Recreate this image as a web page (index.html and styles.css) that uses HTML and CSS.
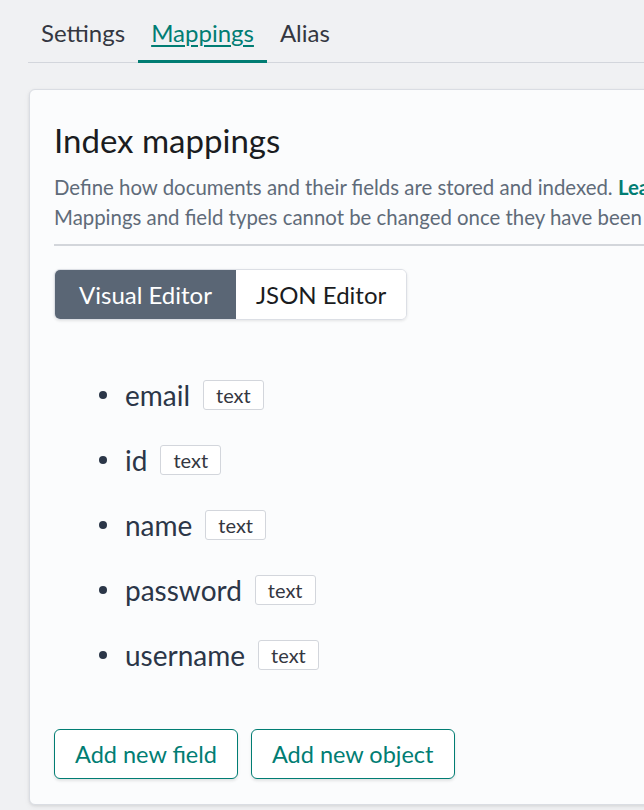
FILE: index.html
```html
<!DOCTYPE html>
<html>
<head>
<meta charset="utf-8">
<link rel="stylesheet" href="styles.css">
</head>
<body>
<div class="page">
  <nav class="tabs">
    <a class="tab">Settings</a>
    <a class="tab active"><span class="tab-label">Mappings</span></a>
    <a class="tab">Alias</a>
  </nav>
  <section class="card">
    <h1 class="title">Index mappings</h1>
    <p class="desc">Define how documents and their fields are stored and indexed. <a class="learn">Learn more.</a><br>Mappings and field types cannot be changed once they have been added.</p>
    <hr class="rule">
    <div class="btn-group">
      <button class="seg seg-on">Visual Editor</button>
      <button class="seg seg-json">JSON Editor</button>
    </div>
    <ul class="fields">
      <li class="field"><span class="fname">email</span><span class="badge">text</span></li>
      <li class="field"><span class="fname">id</span><span class="badge">text</span></li>
      <li class="field"><span class="fname">name</span><span class="badge">text</span></li>
      <li class="field"><span class="fname">password</span><span class="badge">text</span></li>
      <li class="field"><span class="fname">username</span><span class="badge">text</span></li>
    </ul>
    <div class="actions">
      <button class="btn">Add new field</button>
      <button class="btn">Add new object</button>
    </div>
  </section>
</div>
</body>
</html>
```

FILE: styles.css
```css
* { box-sizing: border-box; }
html, body { margin: 0; padding: 0; }
body {
  background: #f0f1f3;
  font-family: Lato, "Noto Sans", sans-serif;
  color: #343741;
  width: 644px;
  height: 810px;
  overflow: hidden;
}
.page {
  padding: 0 0 0 28px;
  width: 700px;
}
.tabs {
  display: flex;
  height: 63px;
  border-bottom: 1px solid #d3d6dc;
  align-items: stretch;
}
.tab {
  display: flex;
  align-items: center;
  padding: 2px 13px 0;
  font-size: 24px;
  color: #343741;
  position: relative;
}
.tab.active { color: #017d73; }
.tab-label { text-decoration: underline; text-underline-offset: 3px; text-decoration-thickness: 1.5px; }
.tab.active::after {
  content: "";
  position: absolute;
  left: 0; right: 0; bottom: -1px;
  height: 3px;
  background: #017d73;
}
.card {
  margin-top: 26px;
  margin-left: 1px;
  background: #fbfcfd;
  border: 1px solid #dadde3;
  border-radius: 6px;
  box-shadow: 0 1px 3px rgba(0,0,0,0.08), 0 2px 6px rgba(0,0,0,0.05);
  padding: 27px 24px 26px;
  height: 716px;
  overflow: hidden;
}
.title {
  margin: 0;
  font-weight: 400;
  font-size: 33px;
  line-height: 46px;
  color: #1a1c21;
}
.desc {
  margin: 9px 0 0;
  font-size: 20.4px;
  line-height: 30px;
  color: #5f6b79;
  white-space: nowrap;
}
.learn { color: #017d73; font-weight: 700; }
.rule {
  margin: 12px 0 0;
  border: 0;
  height: 2px;
  background: #d3d6db;
}
.btn-group {
  margin-top: 23px;
  display: inline-flex;
  border-radius: 6px;
  box-shadow: 0 1px 3px rgba(0,0,0,0.1);
  border: 1px solid #dcdfe5;
  overflow: hidden;
  height: 51px;
}
.seg {
  font-family: inherit;
  font-size: 24px;
  border: 0;
  background: #fff;
  color: #1a1c21;
  padding: 0 24px;
  margin: 0;
}
.seg-json { padding: 0 20px; }
.seg-on { background: #5a6675; color: #fff; }
.fields {
  margin: 42px 0 0;
  padding: 0 0 0 71px;
  list-style: none;
  color: #2b3648;
}
.field {
  height: 65px;
  display: flex;
  align-items: center;
  font-size: 28px;
  line-height: 46px;
}
.field::before {
  content: "";
  flex: none;
  width: 8px;
  height: 8px;
  margin-left: -26px;
  margin-right: 18px;
  border-radius: 50%;
  background: #2b3648;
}
.badge {
  display: inline-block;
  margin-left: 13px;
  border: 1px solid #d3d6dc;
  border-radius: 3px;
  background: #fff;
  font-size: 20px;
  line-height: 28px;
  padding: 0 12px;
  color: #343741;
}
.actions {
  margin-top: 42px;
  display: flex;
  gap: 13px;
}
.btn {
  font-family: inherit;
  height: 50px;
  padding: 0 20px;
  font-size: 23.5px;
  background: #fff;
  color: #017d73;
  border: 1px solid #017d73;
  border-radius: 6px;
  box-shadow: 0 2px 3px rgba(0,0,0,0.1);
}
```
